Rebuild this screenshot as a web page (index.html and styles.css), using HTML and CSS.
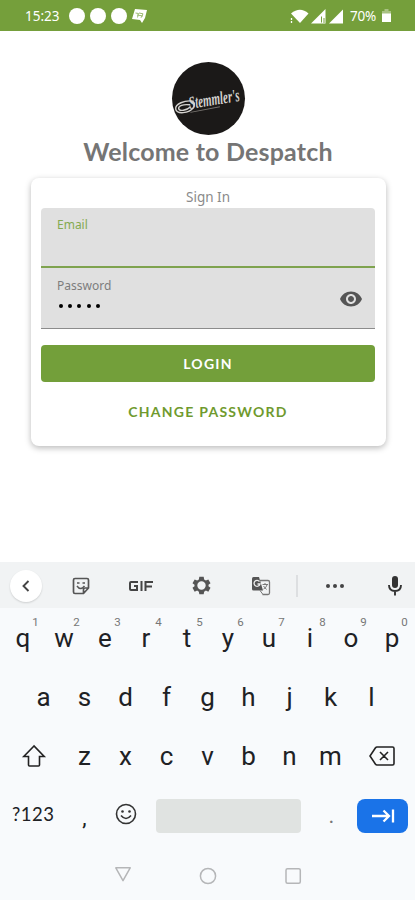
FILE: index.html
```html
<!DOCTYPE html>
<html lang="en">
<head>
    <meta charset="UTF-8">
    <meta name="viewport" content="width=device-width, initial-scale=1.0">
    <title>Despatch Login</title>
    <link rel="stylesheet" href="styles.css">
</head>
<body>

    <div class="status-bar">
        <span class="time">15:23</span>
        <span class="dot"></span>
        <span class="dot"></span>
        <span class="dot"></span>
        <svg class="note" width="16" height="16" viewBox="0 0 16 16">
            <path d="M3 1l12 1-2 8-3 5-2-3-8-1z" fill="#fff"/>
            <path d="M3.500 5l3 .5-1 4M7 5l4 .8-2 4M5 7l6 1" fill="none" stroke="#9dba73" stroke-width="1"/>
        </svg>
        <svg class="wifi" width="19" height="15" viewBox="0 0 19 15">
            <path d="M1 4.500Q10 -3 18.500 4.500L10 14z" fill="#fff"/>
            <path d="M1.500 9v5" stroke="#fff" stroke-width="1.300" stroke-dasharray="2 1"/>
        </svg>
        <svg class="signal" width="15" height="15" viewBox="0 0 15 15">
            <path d="M14.500 0v14.500H0z" fill="#fff"/>
            <path d="M10.500 7.500v6M13 9v5" stroke="#759f3b" stroke-width="1"/>
        </svg>
        <svg class="signal" width="15" height="15" viewBox="0 0 15 15">
            <path d="M14 .5V14.500H0z" fill="#fff"/>
        </svg>
        <span class="percent">70%</span>
        <svg class="battery" width="9" height="14" viewBox="0 0 9 14">
            <path d="M2.500 0h4v2H9v3H0V2h2.500z" fill="#a9c283"/>
            <path d="M0 4.500h9V13H0z" fill="#fff"/>
        </svg>
    </div>

    <div class="container">
        <svg class="logo" width="73" height="73" viewBox="0 0 73 73">
            <circle cx="36.500" cy="36.500" r="36.500" fill="#1b1918"/>
            <g transform="rotate(-9 36 40)" fill="none" stroke="#d4d2cf">
                <text x="17" y="44" font-size="18" textLength="51" lengthAdjust="spacingAndGlyphs" fill="#d4d2cf" stroke="none">Stemmler's</text>
                <path d="M22 37C13 34 3 37 3 42s12 7 18 1M18 40c-7-2-12-1-12 2s8 3 12 0M21 43c2-3 1-5 0-6" stroke-width="1.400"/>
                <path d="M17 47.500l30 -1" stroke-width="1" stroke="#77736f"/>
            </g>
        </svg>
        <h1>Welcome to Despatch</h1>

        <div class="card">
            <p class="subtitle">Sign In</p>
            <div class="field active">
                <label>Email</label>
            </div>
            <div class="field">
                <label>Password</label>
                <div class="bullets"><i></i><i></i><i></i><i></i><i></i></div>
                <svg class="eye" width="24" height="24" viewBox="0 0 24 24">
                    <path fill="#555" d="M12 4.500C7 4.500 2.730 7.610 1 12c1.730 4.390 6 7.500 11 7.500s9.270-3.110 11-7.500c-1.730-4.390-6-7.500-11-7.500zM12 17c-2.760 0-5-2.240-5-5s2.240-5 5-5 5 2.240 5 5-2.240 5-5 5zm0-8c-1.660 0-3 1.340-3 3s1.340 3 3 3 3-1.340 3-3-1.340-3-3-3z"/>
                </svg>
            </div>
            <button class="login">LOGIN</button>
            <button class="change">CHANGE PASSWORD</button>
        </div>
    </div>

    <div class="keyboard">
        <div class="toolbar">
            <span class="tool back">
                <svg width="32" height="32" viewBox="0 0 32 32"><path d="M18.500 11l-5 5 5 5" fill="none" stroke="#444" stroke-width="1.900"/></svg>
            </span>
            <span class="tool">
                <svg width="20" height="20" viewBox="0 0 20 20" fill="none" stroke="#555" stroke-width="1.700">
                    <path d="M4 2.500h12q1.500 0 1.500 1.500v8l-5 5.500H4Q2.500 17.500 2.500 16V4q0-1.500 1.500-1.500zM17.500 12h-3.500q-1.500 0-1.500 1.500v4"/>
                    <path d="M6 7h2.500M11.500 7H14M6 10q3.500 5 7.500 0" stroke-width="1.500"/>
                </svg>
            </span>
            <span class="tool">
                <svg width="24" height="12" viewBox="0 0 24 12" fill="none" stroke="#444" stroke-width="2">
                    <path d="M9 2H2q-1 0-1 1v6q0 1 1 1h6V6H5M12.500 1v10M16.500 11V2H24M17 6.500h6"/>
                </svg>
            </span>
            <span class="tool">
                <svg width="21" height="21" viewBox="0 0 24 24"><path fill="#555" fill-rule="evenodd" d="M9.500 2h5l.5 3 2 1.200 2.800-1.200 2.500 4.300L20 11.200v1.600l2.300 1.900-2.500 4.300-2.800-1.200-2 1.200-.5 3h-5L9 19l-2-1.200L4.200 19l-2.500-4.300L4 12.800v-1.600L1.700 9.300 4.200 5 7 6.200 9 5zM12 7.200a4.800 4.800 0 1 0 0 9.600 4.800 4.800 0 0 0 0-9.600z"/></svg>
            </span>
            <span class="tool">
                <svg width="20" height="20" viewBox="0 0 20 20">
                    <path d="M9 4.500h8q1.500 0 1.500 1.500v11q0 1.500-1.500 1.500h-5.500" fill="none" stroke="#777" stroke-width="1.300"/>
                    <path d="M2.500 1H8l4 13.500H2.500Q1 14.500 1 13V2.500Q1 1 2.500 1z" fill="#555"/>
                    <path d="M8.500 5.500A3 3 0 1 0 9 8H6.500" fill="none" stroke="#eee" stroke-width="1.300"/>
                    <path d="M11.500 8.500h5.500M14 7v1.500M16 9q-1 3-3.500 4M12.500 10l3 3.500M9 14.500l3 4" fill="none" stroke="#777"/>
                </svg>
            </span>
            <span class="divider"></span>
            <span class="tool more"><i></i><i></i><i></i></span>
            <span class="tool mic">
                <svg width="16" height="22" viewBox="0 0 16 22">
                    <rect x="5" y="1" width="6" height="12" rx="3" fill="#333"/>
                    <path d="M2 10q0 6 6 6t6-6M8 16v4.500" fill="none" stroke="#333" stroke-width="1.900"/>
                </svg>
            </span>
        </div>

        <div class="row">
            <span class="key">q<sup>1</sup></span>
            <span class="key">w<sup>2</sup></span>
            <span class="key">e<sup>3</sup></span>
            <span class="key">r<sup>4</sup></span>
            <span class="key">t<sup>5</sup></span>
            <span class="key">y<sup>6</sup></span>
            <span class="key">u<sup>7</sup></span>
            <span class="key">i<sup>8</sup></span>
            <span class="key">o<sup>9</sup></span>
            <span class="key">p<sup>0</sup></span>
        </div>
        <div class="row">
            <span class="key">a</span>
            <span class="key">s</span>
            <span class="key">d</span>
            <span class="key">f</span>
            <span class="key">g</span>
            <span class="key">h</span>
            <span class="key">j</span>
            <span class="key">k</span>
            <span class="key">l</span>
        </div>
        <div class="row">
            <span class="key wide">
                <svg width="24" height="24" viewBox="0 0 24 24"><path d="M12 2L1.800 12.500H6.500V21q0 1 1 1h9q1 0 1-1v-8.500h4.700z" fill="none" stroke="#222" stroke-width="1.600"/></svg>
            </span>
            <span class="key">z</span>
            <span class="key">x</span>
            <span class="key">c</span>
            <span class="key">v</span>
            <span class="key">b</span>
            <span class="key">n</span>
            <span class="key">m</span>
            <span class="key wide">
                <svg width="26" height="20" viewBox="0 0 26 20"><path d="M8 1h15.500q1.500 0 1.500 1.500v15q0 1.500-1.500 1.500H8q-1 0-1.500-.8L1 10l5.500-8.200Q7 1 8 1zM11 6l8 8M19 6l-8 8" fill="none" stroke="#222" stroke-width="1.600"/></svg>
            </span>
        </div>
        <div class="row bottom">
            <span class="symbols">?123</span>
            <span class="key comma">,</span>
            <span class="key emoji">
                <svg width="22" height="22" viewBox="0 0 22 22">
                    <circle cx="11" cy="11" r="9.500" fill="none" stroke="#333" stroke-width="1.600"/>
                    <circle cx="7.500" cy="8.500" r="1.300" fill="#333"/>
                    <circle cx="14.500" cy="8.500" r="1.300" fill="#333"/>
                    <path d="M6 12.500q5 6 10 0" fill="none" stroke="#333" stroke-width="1.600"/>
                </svg>
            </span>
            <span class="space"></span>
            <span class="key period">.</span>
            <span class="enter">
                <svg width="24" height="14" viewBox="0 0 24 14"><path d="M1 7h17M12.500 1.500L18 7l-5.500 5.500M22 .5v13" fill="none" stroke="#fff" stroke-width="2.300"/></svg>
            </span>
        </div>

        <div class="nav">
            <svg width="18" height="18" viewBox="0 0 18 18"><path d="M1.800 .8h14.400L9 13.700z" fill="none" stroke="#b5b6b8" stroke-width="1.500" stroke-linejoin="round"/></svg>
            <svg width="18" height="18" viewBox="0 0 18 18"><circle cx="9" cy="9" r="7.600" fill="none" stroke="#b5b6b8" stroke-width="1.500"/></svg>
            <svg width="18" height="18" viewBox="0 0 18 18"><rect x="2" y="1.700" width="14.300" height="14.600" rx="1.500" fill="none" stroke="#b5b6b8" stroke-width="1.500"/></svg>
        </div>
    </div>

</body>
</html>
```
FILE: styles.css
```css
* {
    box-sizing: border-box;
}
body {
    margin: 0;
    height: 900px;
    display: flex;
    flex-direction: column;
    overflow: hidden;
    background-color: #fff;
    font-family: "Noto Sans", sans-serif;
}
svg {
    display: block;
    flex: none;
    overflow: visible;
}
.status-bar {
    display: flex;
    align-items: center;
    height: 31px;
    padding: 1px 24px 0 25px;
    background-color: #759f3b;
    color: #fff;
    font-size: 13.5px;
}
.time {
    width: 43.5px;
}
.dot {
    width: 16px;
    height: 16px;
    margin-right: 5.3px;
    border-radius: 50%;
    background-color: #fff;
}
.wifi {
    margin-left: auto;
    margin-right: 2px;
}
.signal {
    margin-right: 3px;
}
.percent {
    width: 32px;
    padding-left: 3px;
    letter-spacing: -0.2px;
}
.battery {
    margin-left: 3px;
}
.container {
    display: flex;
    flex-direction: column;
    align-items: center;
    height: 531px;
    padding: 31px 29px 0 30px;
}
.logo text {
    font-family: "Liberation Serif", serif;
    font-style: italic;
    font-weight: bold;
}
h1 {
    margin: 0;
    height: 43px;
    line-height: 32px;
    font-family: Lato, sans-serif;
    font-size: 25px;
    font-weight: bold;
    letter-spacing: 0.2px;
    color: #757575;
    white-space: nowrap;
}
.card {
    width: 355px;
    height: 268px;
    margin-left: 1px;
    padding: 10px 11px 0 10px;
    border-radius: 8px;
    background-color: #fff;
    box-shadow: 0 2px 6px rgba(0, 0, 0, 0.28);
    text-align: center;
}
.subtitle {
    margin: 0;
    height: 20px;
    line-height: 19px;
    font-size: 13.5px;
    color: #8a8a8a;
}
.field {
    position: relative;
    height: 61px;
    padding: 8px 16px;
    background-color: #e0e0e0;
    border-bottom: 1px solid #8c8c8c;
    text-align: left;
}
.field.active {
    height: 60px;
    border-bottom: 2px solid #7fa34f;
    border-radius: 4px 4px 0 0;
}
.field label {
    display: block;
    line-height: 19px;
    font-size: 12px;
    color: #7d7d7d;
}
.field.active label {
    line-height: 17px;
    color: #84aa50;
}
.bullets {
    display: flex;
    gap: 5.2px;
    padding: 9px 0 0 2px;
}
.bullets i {
    width: 4px;
    height: 4px;
    border-radius: 50%;
    background-color: #000;
}
.eye {
    position: absolute;
    right: 12px;
    top: 18.500px;
}
button {
    display: block;
    width: 100%;
    border: none;
    font-family: Lato, sans-serif;
    font-size: 14px;
    font-weight: bold;
    letter-spacing: 1.25px;
    cursor: pointer;
}
.login {
    height: 37px;
    margin-top: 16px;
    border-radius: 4px;
    background-color: #739f3a;
    color: #fff;
}
.change {
    height: 36px;
    margin-top: 11px;
    background: none;
    color: #6f9a2e;
}
.keyboard {
    flex: 1;
    background-color: #f8fafc;
    font-family: Roboto, sans-serif;
    color: #202124;
}
.toolbar {
    display: flex;
    align-items: center;
    height: 46px;
    padding: 1px 0 0 10px;
    background-color: #f1f3f4;
}
.tool {
    display: flex;
    flex: none;
    justify-content: center;
    width: 60px;
}
.back {
    width: 32px;
    margin-right: 9px;
}
.back svg {
    border-radius: 50%;
    background-color: #fff;
    box-shadow: 0 1px 2px rgba(0, 0, 0, 0.15);
}
.divider {
    flex: none;
    width: 2px;
    height: 22px;
    margin-left: 5px;
    background-color: #dddfe1;
}
.more {
    gap: 3px;
    width: 74px;
}
.more i {
    width: 4px;
    height: 4px;
    border-radius: 50%;
    background-color: #444;
}
.mic {
    width: 43px;
    padding-left: 3px;
}
.row {
    display: flex;
    justify-content: center;
    align-items: center;
    height: 59.3px;
}
.key {
    position: relative;
    display: flex;
    justify-content: center;
    width: 41px;
    line-height: 30px;
    font-size: 26px;
}
.key sup {
    position: absolute;
    top: -8px;
    right: 2px;
    width: 12px;
    text-align: center;
    line-height: 14px;
    font-size: 11.5px;
    color: #777;
}
.wide {
    width: 61px;
}
.bottom {
    justify-content: flex-start;
    padding-left: 3px;
}
.symbols {
    width: 61px;
    padding-left: 9px;
    padding-bottom: 3px;
    font-family: Lato, sans-serif;
    font-size: 18.5px;
    letter-spacing: 0.5px;
}
.comma {
    font-size: 22px;
    padding-top: 5px;
}
.emoji {
    padding-bottom: 3px;
}
.space {
    width: 145px;
    height: 34px;
    margin: 0 10px;
    border-radius: 4px;
    background-color: #e0e3e1;
}
.period {
    font-size: 22px;
    color: #777;
}
.enter {
    display: flex;
    justify-content: center;
    align-items: center;
    width: 51px;
    height: 34px;
    margin-left: 5px;
    border-radius: 8px;
    background-color: #1a73e8;
}
.nav {
    display: flex;
    justify-content: center;
    gap: 67px;
    padding-top: 22px;
}
```
